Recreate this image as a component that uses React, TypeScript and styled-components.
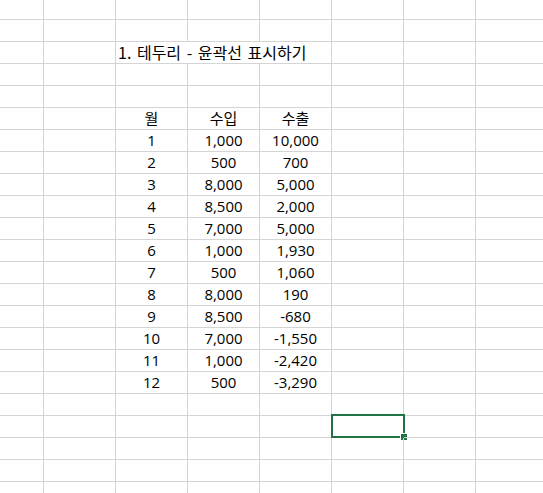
import styled, { createGlobalStyle } from "styled-components"

const GlobalStyle = createGlobalStyle`
	html, body {
		margin: 0;
		padding: 0;
		background: #ffffff;
		overflow: hidden;
	}
`

const COLS = 8
const ROWS = 23

const data = [
	["1", "1,000", "10,000"],
	["2", "500", "700"],
	["3", "8,000", "5,000"],
	["4", "8,500", "2,000"],
	["5", "7,000", "5,000"],
	["6", "1,000", "1,930"],
	["7", "500", "1,060"],
	["8", "8,000", "190"],
	["9", "8,500", "-680"],
	["10", "7,000", "-1,550"],
	["11", "1,000", "-2,420"],
	["12", "500", "-3,290"],
]

export default function App() {
	const cells = []

	for (let r = 0; r < ROWS; r++) {
		for (let c = 0; c < COLS; c++) {
			const key = `${r}-${c}`
			if (r === 2 && c === 2) {
				cells.push(
					<TitleCell key={key}>1. 테두리 - 윤곽선 표시하기</TitleCell>
				)
				continue
			}
			if (r === 2 && (c === 3 || c === 4)) continue

			let text = ""
			if (r === 5 && c >= 2 && c <= 4) {
				text = ["월", "수입", "수출"][c - 2]
			} else if (r >= 6 && r <= 17 && c >= 2 && c <= 4) {
				text = data[r - 6][c - 2]
			}

			const selected = r === 19 && c === 5
			cells.push(
				<Cell key={key} $center={text !== ""}>
					{text}
					{selected && (
						<Selection>
							<Handle />
						</Selection>
					)}
				</Cell>
			)
		}
	}

	return (
		<>
			<GlobalStyle />
			<Sheet>{cells}</Sheet>
		</>
	)
}

const Sheet = styled.div`
	display: grid;
	grid-template-columns: 44px repeat(7, 72px);
	grid-template-rows: 20px;
	grid-auto-rows: 22px;
	width: 543px;
	height: 493px;
	overflow: hidden;
	font-family: "Open Sans", "Noto Sans CJK KR", sans-serif;
	font-size: 15px;
	color: #000000;
`

const Cell = styled.div<{ $center?: boolean }>`
	position: relative;
	box-sizing: border-box;
	border-right: 1px solid #d4d4d4;
	border-bottom: 1px solid #d4d4d4;
	display: flex;
	align-items: flex-end;
	justify-content: ${(p) => (p.$center ? "center" : "flex-start")};
	padding-bottom: 1px;
	line-height: 20px;
	white-space: nowrap;
`

const TitleCell = styled(Cell)`
	grid-column: span 3;
	justify-content: flex-start;
	padding-left: 2px;
	font-family: "Noto Sans CJK KR", sans-serif;
	font-size: 16px;
	word-spacing: 2px;
`

const Selection = styled.div`
	position: absolute;
	left: -1px;
	top: -2px;
	width: 74px;
	height: 24px;
	box-sizing: border-box;
	border: 2px solid #217346;
	pointer-events: none;
`

const Handle = styled.div`
	position: absolute;
	right: -4px;
	bottom: -4px;
	width: 6px;
	height: 6px;
	background: #217346;
	border: 1px solid #ffffff;
	border-right: none;
	border-bottom: none;
`
